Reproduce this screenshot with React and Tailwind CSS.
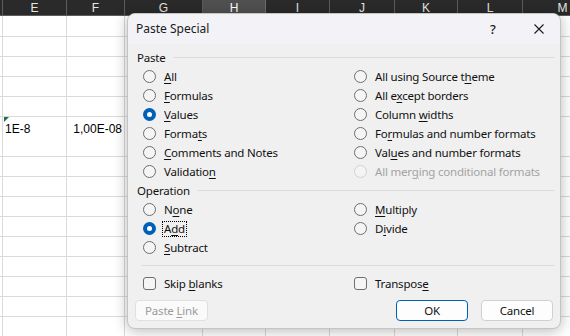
import React from "react";

const cols = [
  { w: 3, l: "" },
  { w: 64, l: "E" },
  { w: 58, l: "F" },
  { w: 78, l: "G" },
  { w: 63, l: "H", sel: true },
  { w: 64, l: "I" },
  { w: 65, l: "J" },
  { w: 63, l: "K" },
  { w: 65, l: "L" },
  { w: 80, l: "M" },
];

const rowHeights = [21, 20, 20, 20, 20, 40, 20, 20, 20, 20, 20, 20, 20, 20, 20, 20];

function Lbl({ t, disabled }) {
  const [a, u, b] = t;
  return (
    <span className={disabled ? "text-[#a3a3a3]" : "text-[#111]"}>
      {a}
      {u && <span className="underline decoration-1 underline-offset-[2px]">{u}</span>}
      {b}
    </span>
  );
}

function Radio({ checked, disabled }) {
  if (checked)
    return (
      <span className="w-[13px] h-[13px] rounded-full bg-[#005fb8] flex items-center justify-center shrink-0">
        <span className="w-[5px] h-[5px] rounded-full bg-white" />
      </span>
    );
  return (
    <span
      className={
        disabled
          ? "w-[13px] h-[13px] rounded-full border border-[#d2d2d2] bg-[#f4f4f4] shrink-0"
          : "w-[13px] h-[13px] rounded-full border border-[#6e6e6e] bg-[#f5f5f5] shrink-0"
      }
    />
  );
}

function RadioItem({ t, checked, disabled, focus }) {
  if (!t) return <div className="h-[19px]" />;
  return (
    <div className="h-[19px] flex items-center gap-[8px]">
      <Radio checked={checked} disabled={disabled} />
      {focus ? (
        <span className="border border-dotted border-black leading-[14px] px-[1px] -ml-[2px]">
          <Lbl t={t} />
        </span>
      ) : (
        <Lbl t={t} disabled={disabled} />
      )}
    </div>
  );
}

function Check({ t }) {
  return (
    <div className="h-[19px] flex items-center gap-[8px]">
      <span className="w-[13px] h-[13px] rounded-[3px] border border-[#6e6e6e] bg-[#f5f5f5] shrink-0" />
      <Lbl t={t} />
    </div>
  );
}

function GroupHeader({ title }) {
  return (
    <div className="h-[19px] flex items-center pl-[9px] pr-[6px] gap-[8px]">
      <span className="text-[#111]">{title}</span>
      <div className="flex-1 h-px bg-[#dadada]" />
    </div>
  );
}

const pasteRows = [
  [{ t: ["", "A", "ll"] }, { t: ["All using Source t", "h", "eme"] }],
  [{ t: ["", "F", "ormulas"] }, { t: ["All e", "x", "cept borders"] }],
  [{ t: ["", "V", "alues"], checked: true }, { t: ["Column ", "w", "idths"] }],
  [{ t: ["Forma", "t", "s"] }, { t: ["Fo", "r", "mulas and number formats"] }],
  [{ t: ["", "C", "omments and Notes"] }, { t: ["Val", "u", "es and number formats"] }],
  [{ t: ["Validatio", "n", ""] }, { t: ["All mer", "g", "ing conditional formats"], disabled: true }],
];

const opRows = [
  [{ t: ["N", "o", "ne"] }, { t: ["", "M", "ultiply"] }],
  [{ t: ["A", "d", "d"], checked: true, focus: true }, { t: ["D", "i", "vide"] }],
  [{ t: ["", "S", "ubtract"] }, {}],
];

function RadioGrid({ rows }) {
  return (
    <div className="grid grid-cols-[211px_1fr] pl-[15px]">
      {rows.map((r, i) => (
        <React.Fragment key={i}>
          <RadioItem {...r[0]} />
          <RadioItem {...r[1]} />
        </React.Fragment>
      ))}
    </div>
  );
}

export default function App() {
  return (
    <div className="relative w-[570px] h-[336px] overflow-hidden bg-white font-['Segoe_UI','Noto_Sans',sans-serif]">
      {/* Spreadsheet */}
      <div className="flex h-[16px] bg-[#2a2a2a] border-b border-[#5c5c5c]">
        {cols.map((c, i) => (
          <div
            key={i}
            style={{ width: c.w }}
            className={
              c.sel
                ? "shrink-0 h-full flex items-center justify-center text-[12px] text-white bg-[#505050] border-r border-[#6a6a6a] font-['Liberation_Sans',sans-serif]"
                : "shrink-0 h-full flex items-center justify-center text-[12px] text-[#e6e6e6] border-r border-[#5c5c5c] font-['Liberation_Sans',sans-serif]"
            }
          >
            {c.l}
          </div>
        ))}
      </div>
      {rowHeights.map((h, r) => (
        <div key={r} className="flex" style={{ height: h }}>
          {cols.map((c, i) => (
            <div
              key={i}
              style={{ width: c.w }}
              className="relative shrink-0 h-full border-r border-b border-[#dadada] text-[12px] text-black font-['Liberation_Sans',sans-serif]"
            >
              {r === 5 && i === 1 && (
                <>
                  <svg className="absolute left-[1px] top-0" width="5" height="5">
                    <polygon points="0,0 5,0 0,5" fill="#1e7145" />
                  </svg>
                  <span className="absolute left-[2px] top-[3px]">1E-8</span>
                </>
              )}
              {r === 5 && i === 2 && (
                <span className="absolute right-[2px] top-[3px]">1,00E-08</span>
              )}
            </div>
          ))}
        </div>
      ))}

      {/* Dialog */}
      <div className="absolute left-[127px] top-[13px] w-[434px] h-[316px] rounded-[8px] border border-[#c4c4c4] bg-[#f0f0f0] shadow-[0_2px_14px_rgba(0,0,0,0.28)] overflow-hidden text-[11.5px] tracking-[-0.2px] flex flex-col">
        <div className="h-[30px] shrink-0 bg-[#f2f2f7] flex items-center pl-[8px] relative">
          <span className="text-[#1a1a1a] text-[12px] tracking-normal">Paste Special</span>
          <span className="absolute left-[362px] top-[6px] text-[#1a1a1a] text-[13px] font-medium">?</span>
          <svg className="absolute left-[406px] top-[10px]" width="10" height="10" viewBox="0 0 10 10">
            <path d="M0.5 0.5 L9.5 9.5 M9.5 0.5 L0.5 9.5" stroke="#1a1a1a" strokeWidth="1.1" />
          </svg>
        </div>
        <div className="pt-[4px] flex flex-col">
          <GroupHeader title="Paste" />
          <RadioGrid rows={pasteRows} />
          <GroupHeader title="Operation" />
          <RadioGrid rows={opRows} />
          <div className="mt-[8px] ml-[14px] mr-[6px] h-px bg-[#dadada]" />
          <div className="mt-[8px] grid grid-cols-[211px_1fr] pl-[15px]">
            <Check t={["Skip ", "b", "lanks"]} />
            <Check t={["Transpos", "e", ""]} />
          </div>
          <div className="mt-[7px] flex items-center px-[7px]">
            <div className="w-[73px] h-[21px] rounded-[4px] border border-[#e0e0e0] bg-[#fafafa] flex items-center justify-center text-[#9a9a9a]">
              <span>
                Paste <span className="underline decoration-1 underline-offset-[2px]">L</span>ink
              </span>
            </div>
            <div className="flex-1" />
            <div className="w-[72px] h-[21px] rounded-[4px] border border-[#005fb8] bg-[#fdfdfd] flex items-center justify-center text-[#111]">
              OK
            </div>
            <div className="w-[72px] h-[21px] ml-[13px] rounded-[4px] border border-[#d0d0d0] bg-[#fdfdfd] flex items-center justify-center text-[#111]">
              Cancel
            </div>
          </div>
        </div>
      </div>
    </div>
  );
}
